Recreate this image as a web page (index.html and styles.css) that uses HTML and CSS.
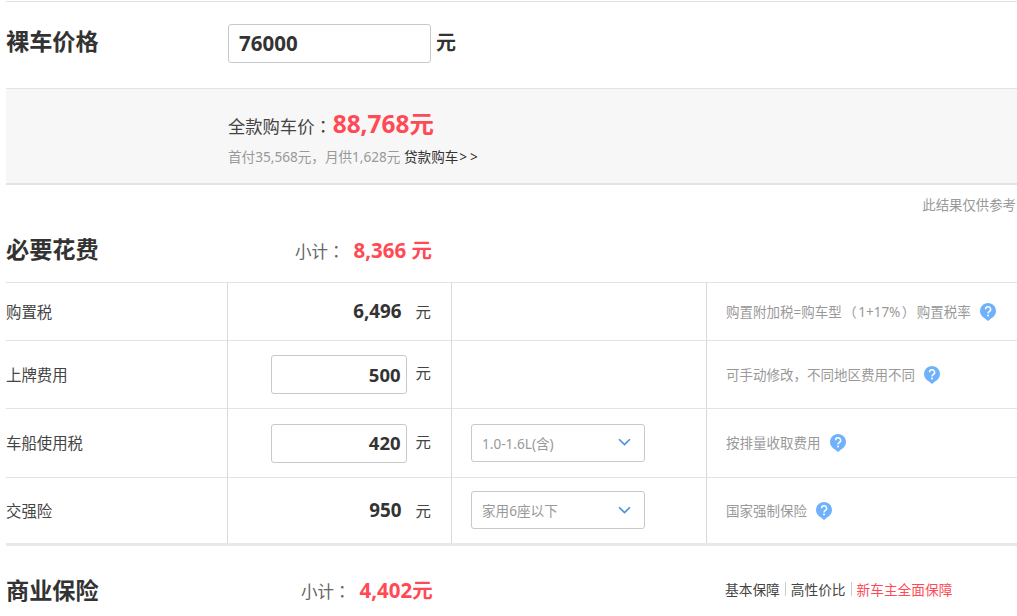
FILE: index.html
```html
<!DOCTYPE html>
<html lang="zh-CN">
<head>
<meta charset="utf-8">
<title>购车计算</title>
<link rel="stylesheet" href="styles.css">
</head>
<body>
<div class="page">
  <section class="price-row">
    <h2 class="title">裸车价格</h2>
    <div class="price-input">76000</div>
    <span class="price-unit">元</span>
  </section>
  <section class="total">
    <p class="total-main">全款购车价<span class="pc">：</span><strong class="total-num">88,768元</strong></p>
    <p class="total-sub">首付35,568元<span class="pc">，</span>月供1,628元 <a class="loan">贷款购车<span class="arrows">&gt;&gt;</span></a></p>
  </section>
  <p class="note">此结果仅供参考</p>
  <section class="head head-a">
    <h2 class="title">必要花费</h2>
    <p class="subtotal sub-a">小计<span class="pc">：</span><strong>8,366 元</strong></p>
  </section>
  <div class="table">
    <div class="row r1">
      <div class="cell name">购置税</div>
      <div class="cell val"><b class="num">6,496</b><span class="unit">元</span></div>
      <div class="cell opt"></div>
      <div class="cell tip"><span>购置附加税=购车型<span class="pc par">（</span>1+17%<span class="pc par">）</span>购置税率</span><svg class="q" viewBox="0 0 16 18"><path d="M8 0a8 8 0 0 1 3 15.4L8 18l-3-2.600A8 8 0 0 1 8 0z" fill="#6fb1fb"/><path d="M5.600 6.300a2.500 2.500 0 1 1 3.700 2.200c-.9.500-1.300 1-1.300 2" fill="none" stroke="#fff" stroke-width="1.500"/><circle cx="8" cy="12.600" r="1" fill="#fff"/></svg></div>
    </div>
    <div class="row r2">
      <div class="cell name">上牌费用</div>
      <div class="cell val"><div class="box">500</div><span class="unit">元</span></div>
      <div class="cell opt"></div>
      <div class="cell tip"><span>可手动修改<span class="pc">，</span>不同地区费用不同</span><svg class="q" viewBox="0 0 16 18"><path d="M8 0a8 8 0 0 1 3 15.4L8 18l-3-2.600A8 8 0 0 1 8 0z" fill="#6fb1fb"/><path d="M5.600 6.300a2.500 2.500 0 1 1 3.700 2.200c-.9.500-1.300 1-1.300 2" fill="none" stroke="#fff" stroke-width="1.500"/><circle cx="8" cy="12.600" r="1" fill="#fff"/></svg></div>
    </div>
    <div class="row r3">
      <div class="cell name">车船使用税</div>
      <div class="cell val"><div class="box">420</div><span class="unit">元</span></div>
      <div class="cell opt"><div class="select">1.0-1.6L(含)<svg class="chev" viewBox="0 0 12 8"><path d="M1 1l5 5 5-5" fill="none" stroke="#4a8fe0" stroke-width="1.500"/></svg></div></div>
      <div class="cell tip">按排量收取费用<svg class="q" viewBox="0 0 16 18"><path d="M8 0a8 8 0 0 1 3 15.4L8 18l-3-2.600A8 8 0 0 1 8 0z" fill="#6fb1fb"/><path d="M5.600 6.300a2.500 2.500 0 1 1 3.700 2.200c-.9.500-1.300 1-1.300 2" fill="none" stroke="#fff" stroke-width="1.500"/><circle cx="8" cy="12.600" r="1" fill="#fff"/></svg></div>
    </div>
    <div class="row r4">
      <div class="cell name">交强险</div>
      <div class="cell val"><b class="num">950</b><span class="unit">元</span></div>
      <div class="cell opt"><div class="select">家用6座以下<svg class="chev" viewBox="0 0 12 8"><path d="M1 1l5 5 5-5" fill="none" stroke="#4a8fe0" stroke-width="1.500"/></svg></div></div>
      <div class="cell tip">国家强制保险<svg class="q" viewBox="0 0 16 18"><path d="M8 0a8 8 0 0 1 3 15.4L8 18l-3-2.600A8 8 0 0 1 8 0z" fill="#6fb1fb"/><path d="M5.600 6.300a2.500 2.500 0 1 1 3.700 2.200c-.9.500-1.300 1-1.300 2" fill="none" stroke="#fff" stroke-width="1.500"/><circle cx="8" cy="12.600" r="1" fill="#fff"/></svg></div>
    </div>
  </div>
  <section class="head head-b">
    <h2 class="title">商业保险</h2>
    <p class="subtotal sub-b">小计<span class="pc">：</span><strong>4,402元</strong></p>
    <p class="plans"><span>基本保障</span><i class="sep"></i><span>高性价比</span><i class="sep"></i><span class="hot">新车主全面保障</span></p>
  </section>
</div>
</body>
</html>
```
FILE: styles.css
```css
* { box-sizing: border-box; }
html, body { margin: 0; padding: 0; background: #fff; overflow: hidden; }
body { width: 1017px; height: 616px; font-family: "Noto Sans", "Noto Sans CJK SC", sans-serif; color: #333; }
h2, p { margin: 0; font-weight: normal; }
.page { padding-top: 1px; padding-left: 6px; height: 616px; overflow: hidden; }
.pc { font-family: "Noto Sans CJK TC", sans-serif; text-spacing-trim: space-all; }
.par { margin: 0 1.5px; }
.title { font-size: 23.2px; font-weight: 700; line-height: 32px; color: #333; width: 222px; flex: none; }

.price-row { height: 87px; border-top: 1px solid #e3e3e3; display: flex; align-items: flex-start; padding-top: 22px; }
.price-row .title { padding-top: 1px; height: 34px; }
.price-input { width: 203px; height: 39px; border: 1px solid #c9c9c9; border-radius: 3px; font-size: 20.5px; font-weight: 700; line-height: 37px; padding-left: 10px; color: #333; }
.price-unit { font-size: 20px; font-weight: 700; margin-left: 5px; line-height: 37px; }

.total { height: 97px; background: #f7f7f7; border-top: 1px solid #e3e3e3; border-bottom: 2px solid #e3e3e3; padding: 19px 0 0 222px; }
.total-main { font-size: 17.3px; line-height: 32px; color: #444; display: flex; align-items: baseline; }
.total-num { font-size: 24.4px; font-weight: 700; color: #ff4a55; margin-left: 1px; }
.total-sub { font-size: 13.6px; line-height: 18px; color: #999; margin-top: 4px; }
.loan { color: #333; }
.arrows { letter-spacing: 3px; margin-left: 1px; }

.note { font-size: 13.4px; line-height: 18px; color: #999; text-align: right; padding-top: 11px; height: 29px; padding-right: 1px; }

.head { display: flex; align-items: center; position: relative; }
.head-a { height: 68px; padding-top: 2px; }
.subtotal { font-size: 16.5px; color: #666; white-space: nowrap; display: flex; align-items: baseline; }
.subtotal strong { font-size: 20.5px; font-weight: 700; color: #ff4a55; margin-left: 9px; }
.sub-a { margin-left: 67px; }
.sub-b { margin-left: 73px; }

.table { border-top: 1px solid #e3e3e3; }
.row { display: grid; grid-template-columns: 222px 224px 255px 1fr; border-bottom: 1px solid #e3e3e3; }
.r1 { height: 58px; }
.r2 { height: 68px; }
.r3 { height: 69px; }
.r4 { height: 68px; border-bottom: 3px solid #e8e8e8; }
.cell { display: flex; align-items: center; }
.name { font-size: 15.4px; color: #444; border-right: 1px solid #d9d9d9; padding-bottom: 1px; }
.r3 .name { padding-bottom: 2px; }
.val { justify-content: flex-end; padding-right: 20px; border-right: 1px solid #d9d9d9; }
.num { font-size: 18.8px; font-weight: 700; color: #333; margin-right: 5px; margin-bottom: 2px; }
.unit { font-size: 15.4px; color: #444; margin-left: 9px; margin-bottom: 1px; }
.box + .unit { margin-bottom: 5px; }
.r3 .box + .unit { margin-bottom: 4px; }
.box { width: 136px; height: 39px; border: 1px solid #c9c9c9; border-radius: 3px; font-size: 18.5px; font-weight: 700; line-height: 37px; text-align: right; padding-right: 5px; color: #333; }
.r3 .box { line-height: 35px; }
.opt { padding-left: 19px; border-right: 1px solid #d9d9d9; }
.select { width: 174px; height: 38px; margin-bottom: 1px; border: 1px solid #c9c9c9; border-radius: 3px; font-size: 13.6px; color: #999; display: flex; align-items: center; justify-content: space-between; padding: 0 13px 0 10px; }
.chev { width: 13px; height: 9px; }
.tip { font-size: 13.5px; color: #999; padding-left: 19px; padding-bottom: 2px; }
.q { width: 16px; height: 18px; margin-left: 9px; margin-top: 2px; flex: none; }

.head-b { height: 88px; padding-bottom: 3px; }
.head-b .title { padding-top: 2px; height: 34px; }
.plans { position: absolute; left: 719px; top: 33px; font-size: 13.7px; color: #444; display: flex; align-items: center; }
.sep { display: inline-block; width: 1px; height: 14px; background: #ccc; margin: 0 5px; }
.hot { color: #ff4a55; }
```
